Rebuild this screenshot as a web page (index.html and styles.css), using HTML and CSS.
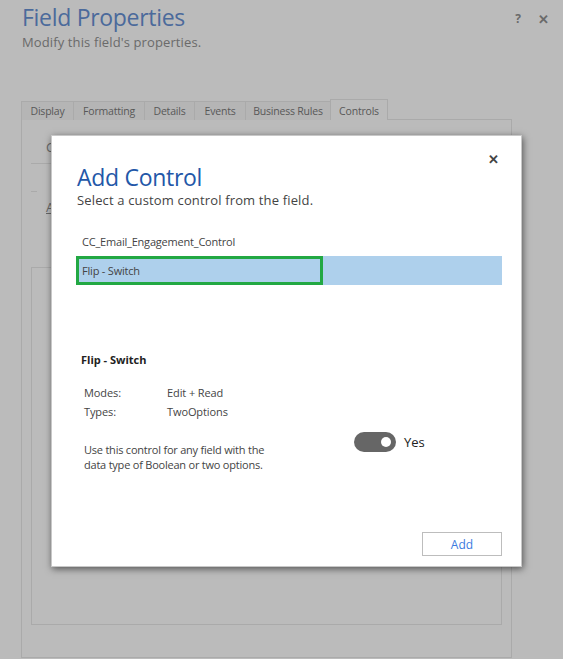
FILE: index.html
```html
<!DOCTYPE html>
<html>
<head>
<meta charset="utf-8">
<link rel="stylesheet" href="styles.css">
</head>
<body>
<div class="page">
  <div class="header">
    <div class="titles">
      <div class="title">Field Properties</div>
      <div class="subtitle">Modify this field's properties.</div>
    </div>
    <div class="header-icons">
      <span class="help">?</span>
      <span class="close">&#x2715;</span>
    </div>
  </div>
  <div class="tabs">
    <div class="tab t-display">Display</div>
    <div class="tab t-format">Formatting</div>
    <div class="tab t-details">Details</div>
    <div class="tab t-events">Events</div>
    <div class="tab t-rules">Business Rules</div>
    <div class="tab active t-controls">Controls</div>
    <div class="tab-fill"></div>
  </div>
  <div class="panel">
    <div class="behind">
      <div class="behind-c">C</div>
      <div class="behind-line"></div>
      <div class="behind-line second"></div>
      <div class="behind-a">A</div>
    </div>
    <div class="inner"></div>
  </div>
</div>

<div class="modal">
  <div class="modal-close">&#x2715;</div>
  <div class="modal-title">Add Control</div>
  <div class="modal-sub">Select a custom control from the field.</div>
  <div class="list">
    <div class="item">CC_Email_Engagement_Control</div>
    <div class="item selected"><span class="focus">Flip - Switch</span></div>
  </div>
  <div class="detail">
    <div class="detail-name">Flip - Switch</div>
    <div class="props">
      <div class="prop"><span class="k">Modes:</span><span>Edit + Read</span></div>
      <div class="prop"><span class="k">Types:</span><span>TwoOptions</span></div>
    </div>
    <div class="desc-row">
      <div class="desc">Use this control for any field with the<br>data type of Boolean or two options.</div>
      <div class="toggle-wrap">
        <span class="toggle"><span class="knob"></span></span>
        <span class="yes">Yes</span>
      </div>
    </div>
  </div>
  <div class="footer">
    <button class="add">Add</button>
  </div>
</div>
</body>
</html>
```
FILE: styles.css
```css
html, body {
  margin: 0;
  padding: 0;
  background: #bbbbbb;
  font-family: "Open Sans", "Noto Sans", sans-serif;
  width: 563px;
  height: 659px;
  overflow: hidden;
}
.page {
  padding: 0 51px 0 21px;
  height: 659px;
  box-sizing: border-box;
  position: relative;
}
.header {
  display: flex;
  justify-content: space-between;
  padding-top: 2px;
  height: 97px;
  box-sizing: border-box;
}
.title {
  font-size: 23px;
  color: #4b6a9b;
  line-height: 30px;
  letter-spacing: -0.3px;
  padding-left: 1px;
}
.subtitle {
  font-size: 13px;
  color: #6a6a6a;
  line-height: 18px;
  margin-top: 1px;
  padding-left: 1px;
  letter-spacing: 0.12px;
}
.header-icons {
  position: absolute;
  right: 14px;
  top: 10px;
  display: flex;
  gap: 17px;
  color: #6a6a6a;
  font-size: 13px;
  font-weight: bold;
}
.help { font-size: 12px; }
.tabs {
  display: flex;
  height: 21px;
  align-items: flex-end;
  margin-top: 2px;
}
.tab {
  height: 19px;
  box-sizing: border-box;
  border: 1px solid #aaaaaa;
  border-bottom: none;
  border-right: none;
  background: #b5b5b5;
  color: #585858;
  font-size: 10.5px;
  line-height: 18px;
  text-align: center;
  letter-spacing: -0.2px;
}
.t-display { width: 52px; }
.t-format { width: 71px; }
.t-details { width: 50px; }
.t-events { width: 51px; }
.t-rules { width: 85px; }
.t-controls { width: 58px; }
.tab.active {
  background: #bbbbbb;
  height: 21px;
  border-right: 1px solid #aaaaaa;
  line-height: 22px;
}
.tab-fill {
  flex: 1;
  border-bottom: 1px solid #aaaaaa;
}
.panel {
  border: 1px solid #aaaaaa;
  border-top: none;
  height: 538px;
  box-sizing: border-box;
  padding: 0 9px;
  display: flex;
  flex-direction: column;
}
.behind {
  height: 147px;
  position: relative;
}
.behind-c {
  font-size: 13px;
  color: #666;
  padding: 18px 0 0 15px;
  height: 25px;
}
.behind-line {
  border-top: 1px solid #aaaaaa;
  width: 30px;
}
.behind-line.second {
  margin-top: 27px;
  width: 6px;
}
.behind-a {
  font-size: 13px;
  color: #666;
  text-decoration: underline;
  padding: 6px 0 0 15px;
}
.inner {
  height: 358px;
  border: 1px solid #aaaaaa;
  box-sizing: border-box;
}
.modal {
  position: absolute;
  left: 51px;
  top: 135px;
  width: 471px;
  height: 432px;
  box-sizing: border-box;
  background: #ffffff;
  border: 1px solid #c8c8c8;
  box-shadow: 1px 2px 7px rgba(0, 0, 0, 0.55);
  padding: 26px 19px 0 24px;
  display: flex;
  flex-direction: column;
}
.modal-close {
  position: absolute;
  right: 22px;
  top: 14px;
  font-size: 13px;
  font-weight: bold;
  color: #444;
}
.modal-title {
  font-size: 23px;
  color: #2357a8;
  line-height: 30px;
  letter-spacing: -0.3px;
  padding-left: 1px;
}
.modal-sub {
  font-size: 13px;
  color: #444444;
  line-height: 16px;
  margin-top: 0;
  letter-spacing: 0.15px;
  padding-left: 1px;
}
.list {
  margin-top: 22px;
}
.item {
  font-size: 11px;
  color: #444;
  line-height: 14px;
  padding: 5px 0 4px 6px;
  height: 28px;
  box-sizing: border-box;
  letter-spacing: -0.2px;
}
.item.selected {
  background: #aed0ec;
  padding: 0;
  margin-top: -2px;
  height: 29px;
}
.focus {
  display: block;
  width: 247px;
  height: 29px;
  box-sizing: border-box;
  border: 3px solid #22a843;
  padding: 5px 0 0 3px;
}
.detail {
  margin-top: 68px;
  padding-left: 5px;
  font-size: 11px;
  color: #333;
}
.detail-name {
  font-weight: bold;
  color: #222;
  line-height: 14px;
  letter-spacing: 0;
}
.props {
  margin-top: 16px;
  padding-left: 3px;
}
.prop {
  display: flex;
  line-height: 19px;
  color: #444;
  letter-spacing: -0.1px;
}
.prop .k { width: 83px; }
.desc-row {
  display: flex;
  align-items: flex-start;
  margin-top: 21px;
  padding-left: 3px;
}
.desc {
  width: 270px;
  line-height: 15px;
  color: #444;
  letter-spacing: -0.22px;
}
.toggle-wrap {
  display: flex;
  align-items: center;
  gap: 8px;
  margin-top: -10px;
}
.toggle {
  width: 42px;
  height: 20px;
  border-radius: 10px;
  background: #666666;
  position: relative;
  display: inline-block;
}
.knob {
  position: absolute;
  right: 5px;
  top: 5px;
  width: 10px;
  height: 10px;
  border-radius: 50%;
  background: #ffffff;
}
.yes {
  font-size: 13px;
  color: #222;
}
.footer {
  margin-top: auto;
  display: flex;
  justify-content: flex-end;
  padding-bottom: 10px;
}
.add {
  width: 80px;
  height: 24px;
  background: #fff;
  border: 1px solid #bdbdbd;
  color: #3b7be0;
  font-family: "Open Sans", "Noto Sans", sans-serif;
  font-size: 12px;
  padding: 0;
}
```
